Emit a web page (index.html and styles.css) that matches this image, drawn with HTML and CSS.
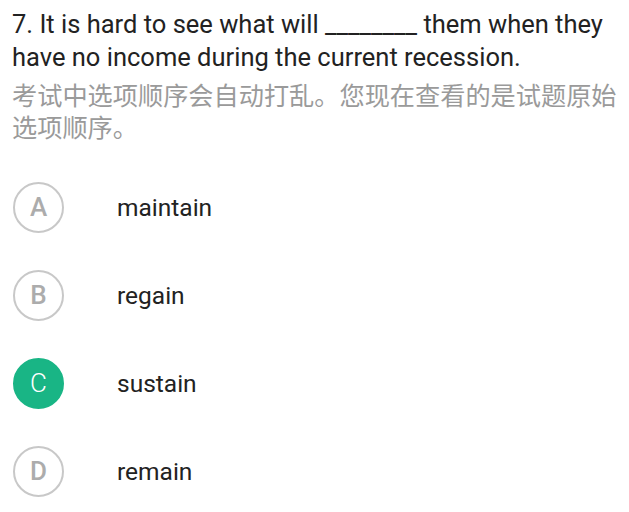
FILE: index.html
```html
<!DOCTYPE html>
<html lang="zh-CN">
<head>
<meta charset="utf-8">
<link rel="stylesheet" href="styles.css">
</head>
<body>
<div class="page">
  <p class="question">7. It is hard to see what will ________ them when they have no income during the current recession.</p>
  <p class="note">考试中选项顺序会自动打乱。您现在查看的是试题原始选项顺序。</p>
  <ul class="options">
    <li class="option"><span class="badge">A</span><span class="label">maintain</span></li>
    <li class="option"><span class="badge">B</span><span class="label">regain</span></li>
    <li class="option"><span class="badge badge-on">C</span><span class="label">sustain</span></li>
    <li class="option"><span class="badge">D</span><span class="label">remain</span></li>
  </ul>
</div>
</body>
</html>
```

FILE: styles.css
```css
html, body {
  margin: 0;
  padding: 0;
  background: #ffffff;
}
.page {
  padding: 8px 0 0 12px;
  font-family: Roboto, "Noto Sans CJK SC", sans-serif;
}
.question {
  margin: 0;
  font-size: 25.5px;
  line-height: 33px;
  color: #222222;
}
.note {
  margin: 4px 0 0 0;
  font-family: "Noto Sans CJK SC", sans-serif;
  font-size: 25.2px;
  line-height: 32px;
  color: #9a9a9a;
}
.options {
  list-style: none;
  margin: 21px 0 0 1px;
  padding: 0;
}
.option {
  display: flex;
  align-items: center;
  height: 88px;
}
.badge {
  box-sizing: border-box;
  width: 51px;
  height: 51px;
  border-radius: 50%;
  border: 2px solid #c8c8c8;
  display: flex;
  align-items: center;
  justify-content: center;
  font-size: 26px;
  font-weight: 500;
  color: #acacac;
  flex: none;
}
.badge-on {
  background: #19b585;
  border-color: #19b585;
  color: #ffffff;
  font-weight: 300;
}
.label {
  margin-left: 53px;
  font-size: 24.5px;
  color: #222222;
}
```
